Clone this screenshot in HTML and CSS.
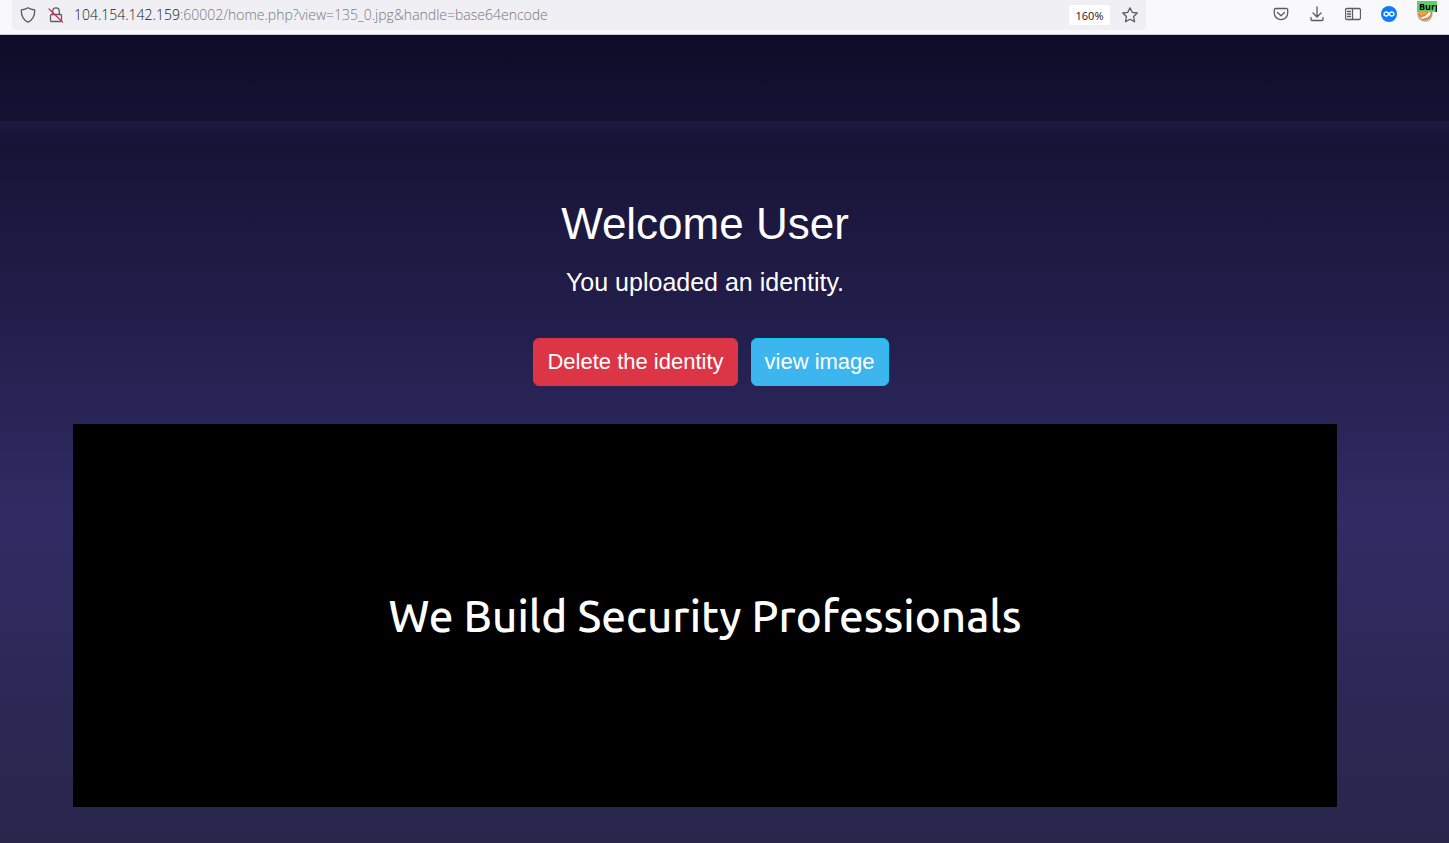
FILE: index.html
```html
<!DOCTYPE html>
<html lang="en">
<head>
<meta charset="utf-8">
<title>Home</title>
<link rel="stylesheet" href="styles.css">
</head>
<body>
<div class="toolbar">
	<div class="urlbar">
		<svg class="icon" viewBox="0 0 16 16"><path d="M8 .8C10 2.300 12.500 2.800 14.700 3C14.900 9 12.500 13 8 15.200C3.500 13 1.100 9 1.300 3C3.500 2.800 6 2.300 8 .8Z"/></svg>
		<svg class="icon lock" viewBox="0 0 16 16"><path d="M4.700 7V4.200a3.300 3.300 0 0 1 6.600 0V7M3.500 7.500h9a1 1 0 0 1 1 1v5a1 1 0 0 1-1 1h-9a1 1 0 0 1-1-1v-5a1 1 0 0 1 1-1Z"/><path class="slash" d="M1 2L14.500 15"/></svg>
		<div class="address">
			<label for="url">104.154.142.159</label>
			<input id="url" type="text" value=":60002/home.php?view=135_0.jpg&amp;handle=base64encode">
		</div>
		<button class="zoom" type="button">160%</button>
		<button class="tool" type="button" aria-label="Bookmark"><svg class="icon" viewBox="0 0 16 16"><path d="M8 .8L10.200 5.300L15.200 6L11.600 9.500L12.500 14.800L8 12.300L3.500 14.800L4.400 9.500L.8 6L5.800 5.300Z"/></svg></button>
	</div>
	<div class="tools">
		<button class="tool" type="button" aria-label="Pocket"><svg class="icon" viewBox="0 0 16 16"><path d="M2.500 2.500h11a1.200 1.200 0 0 1 1.200 1.200V7a6.700 6.700 0 0 1-13.400 0V3.700a1.200 1.200 0 0 1 1.200-1.200ZM4.500 6.500L8 9.700L11.500 6.500"/></svg></button>
		<button class="tool" type="button" aria-label="Downloads"><svg class="icon" viewBox="0 0 16 16"><path d="M8 1V10.500M4 7L8 11L12 7M2 11.500V13.500a1 1 0 0 0 1 1H13a1 1 0 0 0 1-1V11.500"/></svg></button>
		<button class="tool" type="button" aria-label="Sidebar"><svg class="icon" viewBox="0 0 16 16"><path d="M2 2.500h12a1.500 1.500 0 0 1 1.500 1.500v8a1.500 1.500 0 0 1-1.500 1.500H2A1.500 1.500 0 0 1 .500 12V4A1.500 1.500 0 0 1 2 2.500ZM7.500 2.500v11M2.500 5.500h3M2.500 8h3M2.500 10.500h3"/></svg></button>
		<button class="tool" type="button" aria-label="Extension"><svg class="icon" viewBox="0 0 16 16"><circle class="blue" cx="8" cy="8" r="8"/><path class="loop" d="M7.200 9C5.500 10.800 3 10 3 8S5.500 5.200 7.200 7L8.800 9C10.500 10.800 13 10 13 8S10.500 5.200 8.800 7"/></svg></button>
		<button class="tool" type="button" aria-label="Proxy"><svg class="icon" viewBox="0 0 16 16"><circle class="fur" cx="8" cy="8" r="7"/><path class="tail" d="M1.500 8L4 10.500L8 9.500L13 4L14.500 8L11 12L6 13.500"/></svg><span class="badge">Burp</span></button>
	</div>
</div>
<div class="page">
	<div class="navbar"></div>
	<div class="content">
		<h1>Welcome User</h1>
		<p>You uploaded an identity.</p>
		<form class="actions" onsubmit="return false;">
			<button class="btn delete" type="submit">Delete the identity</button>
			<button class="btn view" type="button">view image</button>
		</form>
		<div class="banner">We Build Security Professionals</div>
	</div>
</div>
</body>
</html>
```

FILE: styles.css
```css
* {
	box-sizing: border-box;
}
body {
	margin: 0;
	min-height: 100vh;
	display: flex;
	flex-direction: column;
	font-family: "Liberation Sans", Arial, sans-serif;
	color: white;
}
button, input {
	font-family: inherit;
}

/* browser bar */
.toolbar {
	display: flex;
	align-items: flex-start;
	gap: 127px;
	height: 35px;
	padding: 0 16px 0 12px;
	background-color: #f9f9fb;
	border-bottom: 1px solid #ccccd2;
	font-family: "Open Sans", "Noto Sans", sans-serif;
}
.urlbar {
	flex: 1;
	display: flex;
	align-items: center;
	height: 30px;
	padding: 0 8px;
	background-color: #f0f0f4;
	border-radius: 0 0 4px 4px;
}
.icon {
	display: block;
	width: 16px;
	height: 16px;
	fill: none;
	stroke: #5b5b66;
	stroke-width: 1.3;
	stroke-linejoin: round;
	stroke-linecap: round;
}
.lock {
	margin: 0 10px 0 12px;
}
.slash {
	stroke: #e22850;
}
.address {
	flex: 1;
	display: flex;
	align-items: center;
	font-size: 14px;
	font-weight: 300;
	line-height: 20px;
}
.address label {
	color: #15141a;
}
.address input {
	flex: 1;
	padding: 0;
	border: none;
	outline: none;
	background: none;
	color: #77777e;
	font-size: 14px;
	font-weight: 300;
	line-height: 20px;
}
.zoom {
	width: 41px;
	height: 20px;
	margin-right: 12px;
	padding: 0;
	border: none;
	border-radius: 2px;
	background-color: white;
	color: #15141a;
	font-size: 11px;
}
.tool {
	position: relative;
	padding: 0;
	border: none;
	background: none;
}
.tools {
	display: flex;
	align-items: center;
	gap: 20px;
	height: 28px;
}
.blue {
	fill: #0a7cff;
	stroke: none;
}
.loop {
	stroke: white;
	stroke-width: 1.4;
}
.fur {
	fill: #f3a04a;
	stroke: #b9aaa0;
}
.tail {
	fill: #fff0dc;
	stroke: #b5662a;
	stroke-width: 1;
}
.badge {
	position: absolute;
	top: -5px;
	left: 0;
	width: 20px;
	height: 11px;
	overflow: hidden;
	background-color: #5fd068;
	color: black;
	font-size: 9px;
	font-weight: bold;
	line-height: 11px;
	text-align: left;
	padding-left: 2px;
}

/* page */
.page {
	flex: 1;
	background: linear-gradient(to bottom, #0f0c29, #302b63, #24243e) 0 0 / 100% 970px;
}
.navbar {
	height: 86px;
}
.content {
	padding: 73px 112px 36px 73px;
	text-align: center;
	background: linear-gradient(to bottom, rgba(48, 43, 99, 0.3), rgba(48, 43, 99, 0)) 0 0 / 100% 20px no-repeat;
}
h1 {
	margin: 0 0 10px;
	font-size: 44px;
	font-weight: normal;
	line-height: 60px;
}
p {
	margin: 0 0 38px;
	font-size: 25px;
	line-height: 36px;
}
.actions {
	display: flex;
	justify-content: center;
	gap: 13px;
	margin: 0 0 38px;
	padding-left: 12px;
}
.btn {
	height: 48px;
	padding: 0 13px 0 13px;
	border: 1px solid #dc3545;
	border-radius: 6px;
	color: white;
	font-size: 22px;
	cursor: pointer;
}
.delete {
	background-color: #dc3545;
}
.view {
	background-color: #3db5ee;
	border-color: #0dcaf0;
}
.banner {
	display: flex;
	align-items: center;
	justify-content: center;
	min-height: 383px;
	background-color: black;
	font-family: Ubuntu, "Noto Sans", sans-serif;
	font-size: 44px;
	font-weight: 500;
}
```
